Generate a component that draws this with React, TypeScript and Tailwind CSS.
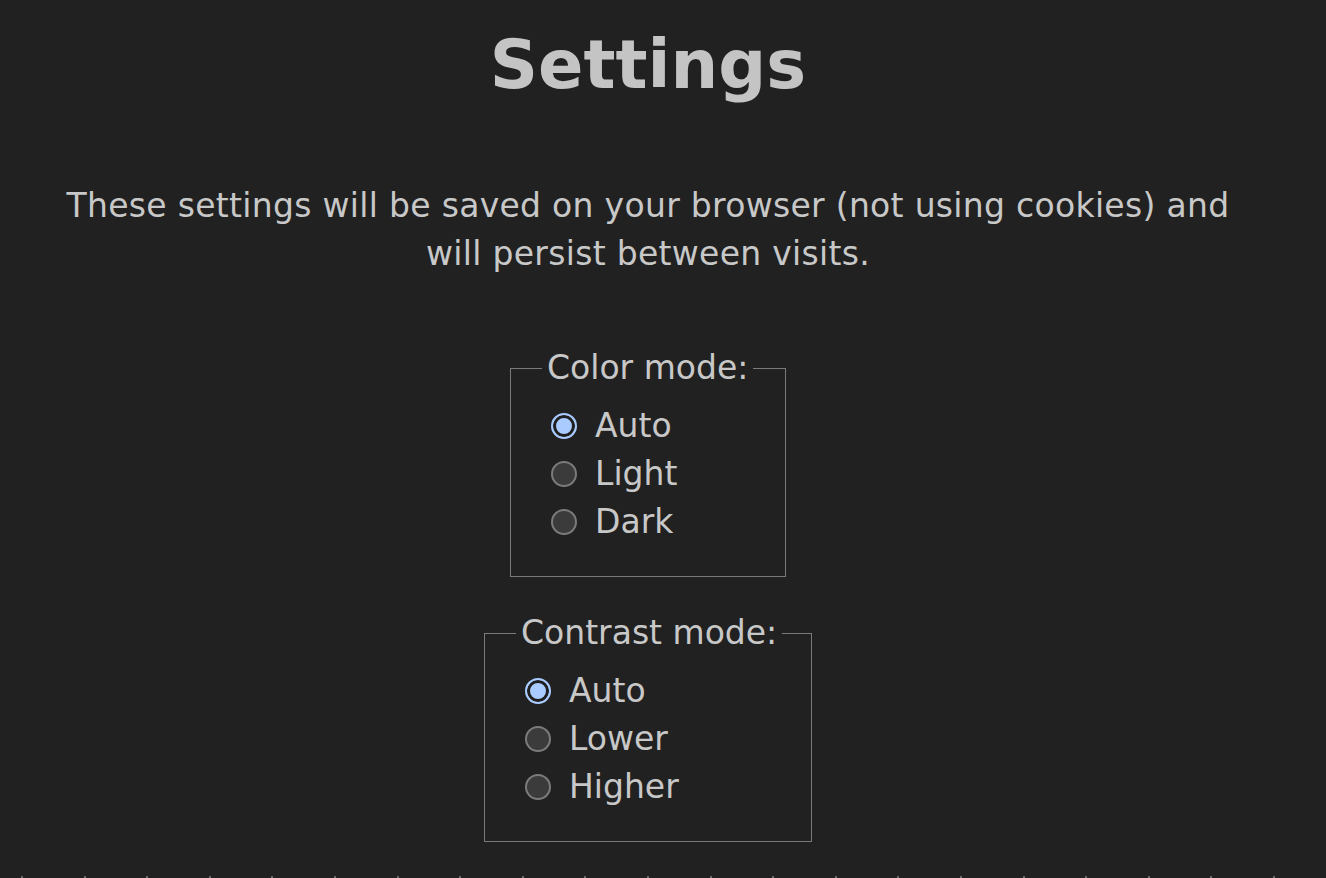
import React from "react";

type Option = { id: string; label: string };

const colorModes: Option[] = [
  { id: "auto", label: "Auto" },
  { id: "light", label: "Light" },
  { id: "dark", label: "Dark" },
];

const contrastModes: Option[] = [
  { id: "auto", label: "Auto" },
  { id: "lower", label: "Lower" },
  { id: "higher", label: "Higher" },
];

function RadioGroup({
  name,
  legend,
  options,
  width,
}: {
  name: string;
  legend: string;
  options: Option[];
  width: string;
}) {
  const [value, setValue] = React.useState("auto");
  return (
    <fieldset className={`${width} border-[1.5px] border-[#7a7a7a] pl-[40px] pb-[30px]`}>
      <legend className="-ml-[9px] px-[5px] leading-[44px]">{legend}</legend>
      <div className="mt-[12px] flex flex-col">
        {options.map((o) => {
          const checked = value === o.id;
          return (
            <label key={o.id} className="flex h-[48px] cursor-pointer items-center gap-[18px]">
              <input
                type="radio"
                name={name}
                checked={checked}
                onChange={() => setValue(o.id)}
                className="sr-only"
              />
              <span
                className={`block h-[26px] w-[26px] rounded-full border-2 ${
                  checked
                    ? "border-[#a9cbff] bg-[#a9cbff] shadow-[inset_0_0_0_3px_#1f1f1f]"
                    : "border-[#7b7b7b] bg-[#3b3b3b]"
                }`}
              />
              <span>{o.label}</span>
            </label>
          );
        })}
      </div>
    </fieldset>
  );
}

export default function App() {
  return (
    <div className="h-[878px] overflow-hidden bg-[#212121] pr-[30px] text-[#c8c8c8] font-['DejaVu_Sans',sans-serif]">
      <div className="flex flex-col items-center">
        <h1 className="mt-[20px] text-[67px] font-bold leading-[91px] text-[#c4c4c4]">
          Settings
        </h1>
        <p className="mt-[71px] max-w-[1200px] text-center text-[33px] leading-[48px] tracking-[0.3px]">
          These settings will be saved on your browser (not using cookies) and will persist between visits.
        </p>
        <div className="mt-[68px] flex flex-col items-center gap-[34px] text-[33px]">
          <RadioGroup name="color" legend="Color mode:" options={colorModes} width="w-[276px]" />
          <RadioGroup name="contrast" legend="Contrast mode:" options={contrastModes} width="w-[328px]" />
        </div>
      </div>
      <div className="mt-[34px] flex">
        {Array.from({ length: 22 }).map((_, i) => (
          <div key={i} className="w-[62.6px] shrink-0 pl-[21px]">
            <div className="h-[3px] w-[2px] bg-[#6a6a6a]" />
          </div>
        ))}
      </div>
    </div>
  );
}
